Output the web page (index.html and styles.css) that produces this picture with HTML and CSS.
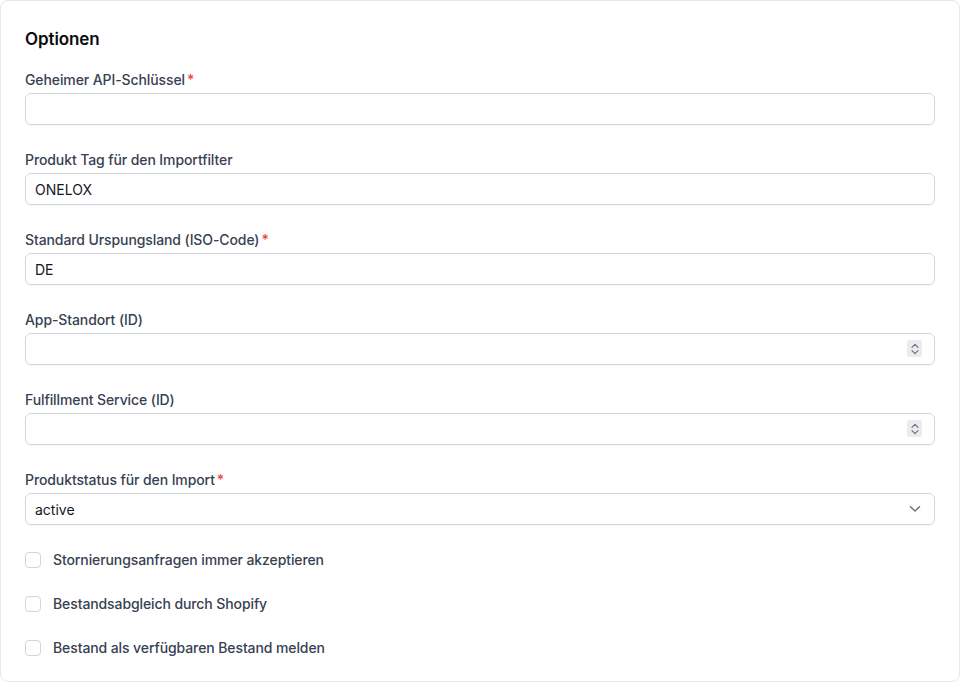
FILE: index.html
```html
<!DOCTYPE html>
<html lang="de">
<head>
<meta charset="utf-8">
<title>Optionen</title>
<link rel="stylesheet" href="styles.css">
</head>
<body>
<div class="card">
  <h2 class="title">Optionen</h2>
  <div class="fields">
    <div class="field">
      <label class="label">Geheimer API-Schlüssel<span class="req">*</span></label>
      <div class="control"><input class="input" type="text" value=""></div>
    </div>
    <div class="field">
      <label class="label">Produkt Tag für den Importfilter</label>
      <div class="control"><input class="input" type="text" value="ONELOX"></div>
    </div>
    <div class="field">
      <label class="label">Standard Urspungsland (ISO-Code)<span class="req">*</span></label>
      <div class="control"><input class="input" type="text" value="DE"></div>
    </div>
    <div class="field">
      <label class="label">App-Standort (ID)</label>
      <div class="control">
        <input class="input" type="text" value="">
        <span class="spinner"><svg width="14" height="16" viewBox="0 0 14 16"><path d="M4 6.3 L7 3.3 L10 6.3" fill="none" stroke="#6b7280" stroke-width="1.2" stroke-linecap="round" stroke-linejoin="round"/><path d="M4 9.7 L7 12.7 L10 9.7" fill="none" stroke="#6b7280" stroke-width="1.2" stroke-linecap="round" stroke-linejoin="round"/></svg></span>
      </div>
    </div>
    <div class="field">
      <label class="label">Fulfillment Service (ID)</label>
      <div class="control">
        <input class="input" type="text" value="">
        <span class="spinner"><svg width="14" height="16" viewBox="0 0 14 16"><path d="M4 6.3 L7 3.3 L10 6.3" fill="none" stroke="#6b7280" stroke-width="1.2" stroke-linecap="round" stroke-linejoin="round"/><path d="M4 9.7 L7 12.7 L10 9.7" fill="none" stroke="#6b7280" stroke-width="1.2" stroke-linecap="round" stroke-linejoin="round"/></svg></span>
      </div>
    </div>
    <div class="field">
      <label class="label">Produktstatus für den Import<span class="req">*</span></label>
      <div class="control">
        <select class="input select"><option>active</option></select>
        <span class="chevron"><svg width="12" height="8" viewBox="0 0 12 8"><path d="M1.5 1.8 L6 6 L10.5 1.8" fill="none" stroke="#6b7280" stroke-width="1.5" stroke-linecap="round" stroke-linejoin="round"/></svg></span>
      </div>
    </div>
  </div>
  <div class="checks">
    <label class="check"><span class="box"></span>Stornierungsanfragen immer akzeptieren</label>
    <label class="check"><span class="box"></span>Bestandsabgleich durch Shopify</label>
    <label class="check"><span class="box"></span>Bestand als verfügbaren Bestand melden</label>
  </div>
</div>
</body>
</html>
```

FILE: styles.css
```css
* { box-sizing: border-box; }
html, body { margin: 0; padding: 0; background: #ffffff; }
body {
  font-family: Inter, "Noto Sans", "Liberation Sans", sans-serif;
  color: #111827;
  -webkit-font-smoothing: antialiased;
}
.card {
  width: 960px;
  height: 682px;
  border: 1px solid #e5e7eb;
  border-radius: 8px;
  padding: 24px 24px 23px 24px;
  background: #fff;
  overflow: hidden;
}
.title {
  margin: 0 0 17px 0;
  font-size: 17px;
  line-height: 28px;
  font-weight: 600;
  color: #0b0b0b;
  letter-spacing: -0.1px;
}
.fields {
  display: flex;
  flex-direction: column;
  gap: 25px;
}
.field {
  display: flex;
  flex-direction: column;
  gap: 3px;
}
.label {
  font-size: 14px;
  line-height: 20px;
  font-weight: 500;
  color: #374151;
  letter-spacing: -0.1px;
}
.req {
  color: #ef4444;
  margin-left: 2px;
}
.control {
  position: relative;
}
.input {
  display: block;
  width: 100%;
  height: 32px;
  border: 1px solid #d1d5db;
  border-radius: 6px;
  padding: 0 9px;
  font-family: inherit;
  font-size: 14px;
  color: #111827;
  background: #fff;
  outline: none;
  box-shadow: 0 1px 1px rgba(0,0,0,0.03);
}
.select {
  appearance: none;
  -webkit-appearance: none;
}
.spinner {
  position: absolute;
  right: 13px;
  top: 7px;
  width: 15px;
  height: 17px;
  background: #ebebef;
  border-radius: 2px;
  display: flex;
  align-items: center;
  justify-content: center;
}
.chevron {
  position: absolute;
  right: 14px;
  top: 12px;
  display: flex;
}
.checks {
  margin-top: 25px;
  display: flex;
  flex-direction: column;
  gap: 24px;
}
.check {
  display: flex;
  align-items: center;
  gap: 12px;
  font-size: 14px;
  line-height: 20px;
  font-weight: 500;
  color: #374151;
  letter-spacing: -0.1px;
}
.box {
  width: 16px;
  height: 16px;
  border: 1px solid #d1d5db;
  border-radius: 4px;
  background: #fff;
  flex: none;
}
```
